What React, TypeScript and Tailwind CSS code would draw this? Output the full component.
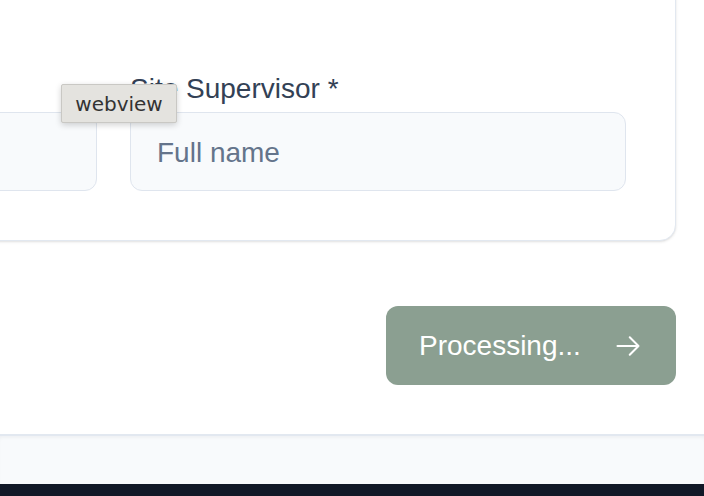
export default function App() {
  return (
    <div className="relative flex min-h-screen flex-col overflow-hidden bg-white font-['Liberation_Sans',Arial,sans-serif]">
      <main className="flex flex-col pr-[28px] pb-[49px]">
        <div className="flex justify-end -mt-[20px]">
          <div className="w-[1125px] shrink-0 rounded-[16px] border border-[#e2e8f0] bg-white px-[49px] pt-[92px] pb-[49px] shadow-sm">
            <div className="grid grid-cols-2 gap-[33px]">
              <div className="flex flex-col">
                <label className="mb-[7px] text-[28px] leading-[32px] text-[#334155]">Site Manager *</label>
                <input
                  className="h-[79px] rounded-[12px] border border-[#dfe5ee] bg-[#f8fafc] px-[26px] text-[28px] text-[#334155] outline-none placeholder:text-[#64748b]"
                  placeholder="Full name"
                />
              </div>
              <div className="flex flex-col">
                <label className="mb-[7px] text-[28px] leading-[32px] text-[#334155]">Site Supervisor *</label>
                <input
                  className="h-[79px] rounded-[12px] border border-[#dfe5ee] bg-[#f8fafc] px-[26px] pt-[3px] text-[28px] text-[#334155] outline-none placeholder:text-[#64748b]"
                  placeholder="Full name"
                />
              </div>
            </div>
          </div>
        </div>

        <div className="mt-[65px] flex justify-end">
          <button className="flex h-[79px] w-[290px] items-center gap-[33px] rounded-[12px] bg-[#8b9f91] px-[33px] text-[28px] text-white">
            <span>Processing...</span>
            <svg width="28" height="28" viewBox="0 0 24 24" fill="none" stroke="currentColor" strokeWidth="1.75" strokeLinecap="round" strokeLinejoin="round">
              <path d="M13.5 4.5 21 12m0 0-7.5 7.5M21 12H3" />
            </svg>
          </button>
        </div>
      </main>

      <div className="h-[50px] border-t-2 border-[#e2e8f0] bg-[#f8fafc] shadow-[inset_0_3px_4px_-2px_rgba(15,23,42,0.06)]" />
      <footer className="h-[60px] bg-[#111827]" />

      <div className="absolute left-[61px] top-[84px] flex h-[39px] w-[116px] items-center justify-center rounded-[2px] border border-[#c9c8c4] bg-[#e4e3df] font-['DejaVu_Sans',sans-serif] text-[20px] text-[#333333] shadow-[0_2px_6px_rgba(0,0,0,0.18)]">
        webview
      </div>
    </div>
  );
}
